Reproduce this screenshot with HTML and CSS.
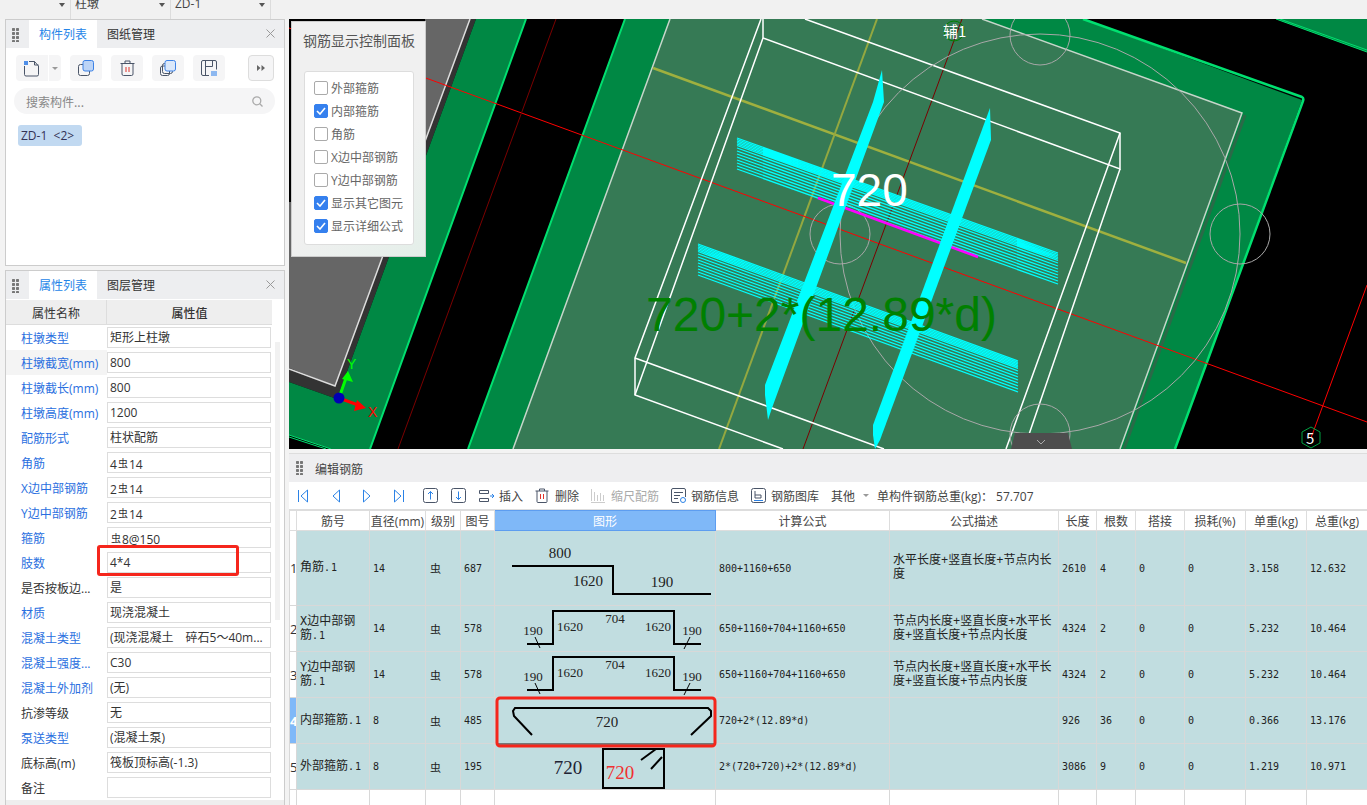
FILE: index.html
```html
<!DOCTYPE html>
<html lang="zh">
<head>
<meta charset="utf-8">
<title>编辑钢筋</title>
<link rel="stylesheet" href="styles.css">
</head>
<body>
<div class="app">
  <header class="topbar">
    <div class="combo"><i class="caret"></i></div>
    <div class="combo"><span>柱墩</span><i class="caret"></i></div>
    <div class="combo"><span>ZD-1</span><i class="caret"></i></div>
  </header>
  <div class="main">
    <aside class="side">
      <section class="panel panel-list">
        <div class="tabs">
          <span class="dots"></span>
          <span class="tab active">构件列表</span>
          <span class="tab">图纸管理</span>
          <span class="close"><svg width="9" height="9" viewBox="0 0 9 9"><path d="M.5.5l8 8M8.500.5l-8 8" stroke="#999" fill="none"/></svg></span>
        </div>
        <div class="tools">
          <span class="tool split">
            <svg width="17" height="17" viewBox="0 0 17 17"><path d="M1.500 6v8.500a1.500 1.500 0 0 0 1.500 1.500h11a1.500 1.500 0 0 0 1.500-1.500V6l-4-4.500H6" class="st"/><path d="M11.500 1.500V5h4" class="st"/><rect x="1" y="1" width="4" height="4" fill="#4f8fe8"/></svg>
            <i class="caret small"></i>
          </span>
          <span class="tool">
            <svg width="16" height="16" viewBox="0 0 16 16"><rect x=".5" y="4.500" width="11" height="11" rx="2" class="st"/><rect x="5" y=".5" width="10.500" height="10.500" rx="2" fill="#bcd4f6" stroke="#3d82e6"/></svg>
          </span>
          <span class="tool">
            <svg width="15" height="16" viewBox="0 0 15 16"><path d="M.5 3.500h14M5 3.500V1h5v2.500M2 3.500v10.500a1.500 1.500 0 0 0 1.500 1.500h8a1.500 1.500 0 0 0 1.500-1.500V3.500" class="st"/><path d="M6 7v5M9 7v5" stroke="#e0332a" fill="none"/></svg>
          </span>
          <span class="tool">
            <svg width="16" height="16" viewBox="0 0 16 16"><rect x=".5" y="6" width="9" height="9.500" rx="2" class="st"/><rect x="2.500" y="3.500" width="10" height="10" rx="2" class="st"/><rect x="5" y=".5" width="10.500" height="10.500" rx="2" fill="#dbe8fa" stroke="#3d82e6"/></svg>
          </span>
          <span class="tool">
            <svg width="16" height="16" viewBox="0 0 16 16"><path d="M8 15.500H2A1.500 1.500 0 0 1 .5 14V2A1.500 1.500 0 0 1 2 .5h12A1.500 1.500 0 0 1 15.500 2v7.500M4.500 1v14.500M4.500 6.500h7M11.500 1v5.500" class="st"/><rect x="10" y="11" width="6" height="5" fill="#8db8f0"/></svg>
          </span>
          <span class="tool more">
            <svg width="8" height="6" viewBox="0 0 8 6"><path d="M0 0l3.500 3L0 6zM4.500 0L8 3 4.500 6z" fill="#666"/></svg>
          </span>
        </div>
        <div class="search">
          <span>搜索构件...</span>
          <svg width="11" height="11" viewBox="0 0 11 11"><circle cx="4.800" cy="4.800" r="4" fill="none" stroke="#aaa" stroke-width="1.300"/><path d="M7.800 7.800L10.500 10.500" stroke="#aaa" stroke-width="1.300"/></svg>
        </div>
        <div class="tag">ZD-1&nbsp; &lt;2&gt;</div>
      </section>

      <section class="panel panel-props">
        <div class="tabs">
          <span class="dots"></span>
          <span class="tab active">属性列表</span>
          <span class="tab">图层管理</span>
          <span class="close"><svg width="9" height="9" viewBox="0 0 9 9"><path d="M.5.5l8 8M8.500.5l-8 8" stroke="#999" fill="none"/></svg></span>
        </div>
        <div class="prop-head"><span class="ph1">属性名称</span><span class="ph2">属性值</span></div>
        <div class="prop-body">
          <div class="prop"><span class="key link">柱墩类型</span><span class="val">矩形上柱墩</span></div>
          <div class="prop hover"><span class="key link">柱墩截宽(mm)</span><span class="val">800</span></div>
          <div class="prop"><span class="key link">柱墩截长(mm)</span><span class="val">800</span></div>
          <div class="prop"><span class="key link">柱墩高度(mm)</span><span class="val">1200</span></div>
          <div class="prop"><span class="key link">配筋形式</span><span class="val">柱状配筋</span></div>
          <div class="prop"><span class="key link">角筋</span><span class="val">4<b class="rb">虫</b>14</span></div>
          <div class="prop"><span class="key link">X边中部钢筋</span><span class="val">2<b class="rb">虫</b>14</span></div>
          <div class="prop"><span class="key link">Y边中部钢筋</span><span class="val">2<b class="rb">虫</b>14</span></div>
          <div class="prop"><span class="key link">箍筋</span><span class="val"><b class="rb">虫</b>8@150</span></div>
          <div class="prop"><span class="key link">肢数</span><span class="val">4*4</span></div>
          <div class="prop"><span class="key">是否按板边...</span><span class="val">是</span></div>
          <div class="prop"><span class="key link">材质</span><span class="val">现浇混凝土</span></div>
          <div class="prop"><span class="key link">混凝土类型</span><span class="val">(现浇混凝土　碎石5～40m...</span></div>
          <div class="prop"><span class="key link">混凝土强度...</span><span class="val">C30</span></div>
          <div class="prop"><span class="key link">混凝土外加剂</span><span class="val">(无)</span></div>
          <div class="prop"><span class="key">抗渗等级</span><span class="val">无</span></div>
          <div class="prop"><span class="key link">泵送类型</span><span class="val">(混凝土泵)</span></div>
          <div class="prop"><span class="key">底标高(m)</span><span class="val">筏板顶标高(-1.3)</span></div>
          <div class="prop"><span class="key">备注</span><span class="val"></span></div>
          <span class="vscroll"></span>
          <span class="callout"></span>
        </div>
        <div class="hscroll"></div>
      </section>
    </aside>

    <div class="work">
      <div class="view">
        <svg class="scene" viewBox="289 19 1078 430" width="1078" height="430">
          <rect x="289" y="19" width="1078" height="430" fill="#000"/>
          <polygon points="425,19 470,19 335,386 289,368 289,202 425,202" fill="#666"/>
          <polygon points="470,19 476,19 337,399 289,382 289,368 335,386" fill="#333"/>
          <polyline points="470,19 335,386 289,369" fill="none" stroke="#ddd" stroke-width="1.500"/>
          <polygon points="476,19 526,19 370,449 331,449 289,435 289,382 337,399" fill="#008844"/>
          <path d="M289 435L331 449M289 437L326 449" stroke="#00e070" stroke-width="1"/>
          <polygon points="625,19 1083,19 1302,100 1175,449 468,449" fill="#008844"/>
          <polygon points="1276,19 1367,19 1367,52" fill="#008844"/>
          <path d="M1276 19L1367 52M1280 19L1367 50" stroke="#00e070" stroke-width="1"/>
          <path d="M526 19L370 449M625 19L468 449" stroke="#00e070" stroke-width="2"/>
          <path d="M1083 19L1302 97Q1304 98 1303 101L1175 449" fill="none" stroke="#00e070" stroke-width="2.500"/>
          <polygon points="670,19 982,19 1242,113 1120,449 513,449" fill="#367a55"/>
          <path d="M1245 115L1124 449" stroke="#2a6a48" stroke-width="3"/>
          <path d="M670 19L513 449M982 19L1242 113L1120 449" fill="none" stroke="#c6d6ca" stroke-width="1.500"/>
          <path d="M653 68L1186 263" stroke="#9fb03f" stroke-width="2.500"/>
          <path d="M877 19L719 449" stroke="#94a840" stroke-width="2"/>
          <path d="M289 28L1367 422" stroke="#f00" stroke-width="1"/>
          <path d="M962 19L803 449" stroke="#7a0000" stroke-width="1"/>
          <path d="M556 19L398 449" stroke="#7a0000" stroke-width="1"/>
          <path d="M1367 285L1311 438" stroke="#f00" stroke-width="1"/>
          <g fill="none" stroke="#fff" stroke-width="1.500">
            <path d="M805 19L1120 133V169L763 38V19"/>
            <path d="M761 19L635 358V395L783 449"/>
            <path d="M763 38L635 395M635 358L884 449"/>
            <path d="M1120 133L1006 449M1120 169L1024 449"/>
          </g>
          <g fill="none" stroke="#a8a8a8" stroke-width="1">
            <circle cx="1040" cy="234" r="200"/>
            <circle cx="1040" cy="35" r="30"/>
            <circle cx="1240" cy="234" r="30"/>
            <circle cx="840" cy="234" r="30"/>
            <circle cx="1040" cy="434" r="30"/>
          </g>
          <g class="hatch">
            <path d="M737 138L1058 253M737 139.500L1058 254.500M737 141L1058 256M737 142.500L1058 257.500M737 144L1058 259M737 145.500L1058 260.500M737 148L1058 263M737 151L1058 266M737 154L1058 269M737 157L1058 272M737 160L1058 275M737 163L1058 278M737 166L1058 281M737 169L1058 284"/>
            <path d="M698 244L1018 361M698 245.500L1018 362.500M698 247L1018 364M698 248.500L1018 365.500M698 250L1018 367M698 251.500L1018 368.500M698 254L1018 371M698 257L1018 374M698 260L1018 377M698 263L1018 380M698 266L1018 383M698 269L1018 386M698 272L1018 389M698 275L1018 392"/>
          </g>
          <path d="M818 198L978 257" stroke="#f0f" stroke-width="2.500"/>
          <polygon points="882,70 884,102 772,408 768,420 765,395 765,385 873,102" fill="#0ff"/>
          <polygon points="990,108 991,140 880,440 875,449 873,435 873,425 980,135" fill="#0ff"/>
          <text x="831" y="206" class="big-white">720</text>
          <text x="646" y="331" class="big-green">720+2*(12.89*d)</text>
          <circle cx="954" cy="31" r="10" fill="none" stroke="#008000"/>
          <text x="943" y="37" class="axis-note">辅1</text>
          <polygon points="1311,427 1320,432 1320,443 1311,448 1302,443 1302,432" fill="none" stroke="#00a040"/>
          <text x="1306" y="444" class="axis-note">5</text>
          <polygon points="1015,433 1068,433 1072,449 1011,449" fill="#4d4d4d"/>
          <path d="M1037 440l4 4 4-4" fill="none" stroke="#aaa"/>
          <path d="M339 398L346 378" stroke="#0f0" stroke-width="3"/>
          <polygon points="348,371 353,382 342,379" fill="#0f0"/>
          <path d="M339 398L358 405" stroke="#f00" stroke-width="3"/>
          <polygon points="366,408 354,411 357,400" fill="#f00"/>
          <circle cx="339" cy="398" r="5.500" fill="#0000b4"/>
          <text x="347" y="369" class="axis-y">Y</text>
          <text x="368" y="417" class="axis-x">X</text>
        </svg>
        <div class="control">
          <div class="control-title">钢筋显示控制面板</div>
          <div class="checks">
            <div class="check"><span class="box"></span>外部箍筋</div>
            <div class="check"><span class="box on"><svg width="10" height="8" viewBox="0 0 10 8"><path d="M1 4l3 3 5-6" fill="none" stroke="#fff" stroke-width="1.600"/></svg></span>内部箍筋</div>
            <div class="check"><span class="box"></span>角筋</div>
            <div class="check"><span class="box"></span>X边中部钢筋</div>
            <div class="check"><span class="box"></span>Y边中部钢筋</div>
            <div class="check"><span class="box on"><svg width="10" height="8" viewBox="0 0 10 8"><path d="M1 4l3 3 5-6" fill="none" stroke="#fff" stroke-width="1.600"/></svg></span>显示其它图元</div>
            <div class="check"><span class="box on"><svg width="10" height="8" viewBox="0 0 10 8"><path d="M1 4l3 3 5-6" fill="none" stroke="#fff" stroke-width="1.600"/></svg></span>显示详细公式</div>
          </div>
        </div>
      </div>

      <section class="editor">
        <div class="editor-head"><span class="dots"></span><span class="editor-title">编辑钢筋</span></div>
        <div class="bar">
          <span class="ico i-first"><svg width="10" height="14" viewBox="0 0 10 14"><path d="M.5 1v12M9.500 1L3 7l6.500 6z" fill="none" stroke="#2b82e6"/></svg></span>
          <span class="ico i-prev"><svg width="8" height="14" viewBox="0 0 8 14"><path d="M7.500 1L1 7l6.500 6z" fill="none" stroke="#2b82e6"/></svg></span>
          <span class="ico i-next"><svg width="8" height="14" viewBox="0 0 8 14"><path d="M.5 1L7 7l-6.500 6z" fill="none" stroke="#2b82e6"/></svg></span>
          <span class="ico i-last"><svg width="10" height="14" viewBox="0 0 10 14"><path d="M9.500 1v12M.5 1L7 7l-6.500 6z" fill="none" stroke="#2b82e6"/></svg></span>
          <span class="ico i-up"><svg width="15" height="15" viewBox="0 0 15 15"><rect x=".5" y=".5" width="14" height="14" rx="2" class="st"/><path d="M7.500 11.500v-8M5 6l2.500-2.500L10 6" fill="none" stroke="#2b82e6"/></svg></span>
          <span class="ico i-down"><svg width="15" height="15" viewBox="0 0 15 15"><rect x=".5" y=".5" width="14" height="14" rx="2" class="st"/><path d="M7.500 3.500v8M5 9l2.500 2.500L10 9" fill="none" stroke="#2b82e6"/></svg></span>
          <span class="act i-ins"><svg width="16" height="12" viewBox="0 0 16 12"><path d="M.5.5h9v3h-9zM.5 8.500h9v3h-9z" class="st"/><path d="M11 6h4M13 4l2 2-2 2" fill="none" stroke="#2b82e6"/></svg>插入</span>
          <span class="act i-del"><svg width="14" height="15" viewBox="0 0 14 15"><path d="M.5 3h13M4.500 3V1h5v2M2 3v10.500A1 1 0 0 0 3 14.500h8a1 1 0 0 0 1-1V3" class="st"/><path d="M5.500 6v5M8.500 6v5" stroke="#e0332a" fill="none"/></svg>删除</span>
          <span class="act i-scale off"><svg width="14" height="15" viewBox="0 0 14 15"><path d="M.5 1v12M3.500 4v9M6.500 7v6M9.500 5v8M12.500 7v6M0 14.500h14" stroke="#ccc" fill="none"/></svg>缩尺配筋</span>
          <span class="act i-info"><svg width="15" height="15" viewBox="0 0 15 15"><path d="M8 14.500H2A1.500 1.500 0 0 1 .5 13V2A1.500 1.500 0 0 1 2 .5h11A1.500 1.500 0 0 1 14.500 2v7M3 4.500h9M3 7.500h6M3 10.500h4" class="st"/><circle cx="12" cy="12" r="2.500" fill="none" stroke="#2b82e6"/></svg>钢筋信息</span>
          <span class="act i-lib"><svg width="15" height="15" viewBox="0 0 15 15"><rect x=".5" y=".5" width="14" height="14" rx="2" class="st"/><path d="M4 3v7h6V7H4" class="st"/><path d="M3 12.500h9" stroke="#2b82e6"/></svg>钢筋图库</span>
          <span class="act i-other">其他<i class="caret small"></i></span>
          <span class="act i-total">单构件钢筋总重(kg)： 57.707</span>
        </div>
        <table class="grid">
          <colgroup>
            <col class="c0"><col class="c1"><col class="c2"><col class="c3"><col class="c4"><col class="c5"><col class="c6"><col class="c7"><col class="c8"><col class="c9"><col class="c10"><col class="c11"><col class="c12"><col class="c13">
          </colgroup>
          <thead>
            <tr>
              <th></th><th>筋号</th><th>直径(mm)</th><th>级别</th><th>图号</th><th class="sel">图形</th><th>计算公式</th><th>公式描述</th><th>长度</th><th>根数</th><th>搭接</th><th>损耗(%)</th><th>单重(kg)</th><th>总重(kg)</th>
            </tr>
          </thead>
          <tbody>
            <tr class="r1">
              <td class="no">1</td><td class="cjk">角筋<span class="lat">.1</span></td><td>14</td><td class="grade">虫</td><td>687</td>
              <td class="fig"><svg viewBox="495 531 221 74" width="221" height="74"><path d="M512 566H613V594H711" class="bar-line"/><text x="560" y="558" class="n15">800</text><text x="588" y="586" class="n15">1620</text><text x="662" y="587" class="n15">190</text></svg></td>
              <td>800+1160+650</td><td class="cjk">水平长度+竖直长度+节点内长度</td><td>2610</td><td>4</td><td>0</td><td>0</td><td>3.158</td><td>12.632</td>
            </tr>
            <tr class="r2">
              <td class="no">2</td><td class="cjk">X边中部钢筋<span class="lat">.1</span></td><td>14</td><td class="grade">虫</td><td>578</td>
              <td class="fig"><svg viewBox="495 606 221 45" width="221" height="45"><path d="M527 644H553V611H674V644H701" class="bar-line"/><path d="M535 637L540 648M690 637L684 649" class="tick"/><text x="533" y="635" class="n13">190</text><text x="570" y="631" class="n13">1620</text><text x="615" y="623" class="n13">704</text><text x="658" y="631" class="n13">1620</text><text x="692" y="635" class="n13">190</text></svg></td>
              <td>650+1160+704+1160+650</td><td class="cjk">节点内长度+竖直长度+水平长度+竖直长度+节点内长度</td><td>4324</td><td>2</td><td>0</td><td>0</td><td>5.232</td><td>10.464</td>
            </tr>
            <tr class="r2">
              <td class="no">3</td><td class="cjk">Y边中部钢筋<span class="lat">.1</span></td><td>14</td><td class="grade">虫</td><td>578</td>
              <td class="fig"><svg viewBox="495 606 221 45" width="221" height="45"><path d="M527 644H553V611H674V644H701" class="bar-line"/><path d="M535 637L540 648M690 637L684 649" class="tick"/><text x="533" y="635" class="n13">190</text><text x="570" y="631" class="n13">1620</text><text x="615" y="623" class="n13">704</text><text x="658" y="631" class="n13">1620</text><text x="692" y="635" class="n13">190</text></svg></td>
              <td>650+1160+704+1160+650</td><td class="cjk">节点内长度+竖直长度+水平长度+竖直长度+节点内长度</td><td>4324</td><td>2</td><td>0</td><td>0</td><td>5.232</td><td>10.464</td>
            </tr>
            <tr class="r2">
              <td class="no cur">4</td><td class="cjk">内部箍筋<span class="lat">.1</span></td><td>8</td><td class="grade">虫</td><td>485</td>
              <td class="fig"><svg viewBox="495 698 221 45" width="221" height="45"><path d="M532 735L514 716L513 711L515 708H708L711 711V716L691 735" class="bar-line"/><text x="607" y="727" class="n15">720</text><path d="M496 744H716" stroke="#777" stroke-width="2"/><rect x="497" y="698" width="218" height="48" rx="3" class="red-box"/></svg></td>
              <td>720+2*(12.89*d)</td><td></td><td>926</td><td>36</td><td>0</td><td>0</td><td>0.366</td><td>13.176</td>
            </tr>
            <tr class="r2">
              <td class="no">5</td><td class="cjk">外部箍筋<span class="lat">.1</span></td><td>8</td><td class="grade">虫</td><td>195</td>
              <td class="fig"><svg viewBox="495 744 221 45" width="221" height="45"><text x="568" y="774" class="n18">720</text><rect x="603" y="749" width="61" height="39" class="bar-line"/><text x="620" y="779" class="n18 red">720</text><path d="M641 760L656 749M651 769L662 757" class="bar-line"/></svg></td>
              <td>2*(720+720)+2*(12.89*d)</td><td></td><td>3086</td><td>9</td><td>0</td><td>0</td><td>1.219</td><td>10.971</td>
            </tr>
            <tr class="r2 blank">
              <td class="no">6</td><td></td><td></td><td></td><td></td><td></td><td></td><td></td><td></td><td></td><td></td><td></td><td></td><td></td>
            </tr>
          </tbody>
        </table>
      </section>
    </div>
  </div>
</div>
</body>
</html>
```
FILE: styles.css
```css
* { box-sizing: border-box; }
html, body { margin: 0; padding: 0; }
body {
  width: 1367px;
  height: 805px;
  overflow: hidden;
  background: #f3f3f3;
  font: 12px/1.2 "Open Sans", "Noto Sans CJK SC", sans-serif;
  color: #333;
}
.app { display: flex; flex-direction: column; height: 805px; }
.st { fill: none; stroke: #4a5568; }

.topbar { height: 19px; flex: none; display: flex; background: #f1f1f1; overflow: hidden; }
.combo {
  width: 100px;
  height: 19px;
  display: flex;
  justify-content: space-between;
  align-items: flex-end;
  padding: 0 5px 9px 4px;
  border-right: 1px solid #dcdcdc;
  font-size: 12px;
  line-height: 14px;
  color: #444;
}
.combo:first-child { width: 71px; justify-content: flex-end; padding-right: 5px; }
.combo:nth-child(n+2) span { display: block; transform: translateY(1px); }
.caret { display: block; width: 0; height: 0; border: 3.500px solid transparent; border-top: 4px solid #555; border-bottom: 0; margin-bottom: 3px; }
.caret.small { border-width: 3px 3px 0; border-top-color: #999; margin: 0; }

.main { flex: 1; display: flex; min-height: 0; }
.side { width: 289px; flex: none; padding-left: 5px; display: flex; flex-direction: column; gap: 4px; }
.panel { width: 280px; background: #fff; border: 1px solid #ccc; }
.panel-list { height: 247px; }
.panel-props { height: 535px; }

.tabs { height: 28px; display: flex; align-items: stretch; background: #edeef0; position: relative; padding-left: 23px; }
.dots {
  width: 7px;
  height: 14px;
  flex: none;
  background-image: radial-gradient(circle at 1.500px 1.500px, #777 1.400px, transparent 1.500px);
  background-size: 4px 4px;
}
.tabs .dots { position: absolute; left: 6px; top: 8px; }
.tab { width: 68px; display: flex; align-items: center; justify-content: center; padding-bottom: 2px; font: 12px "Noto Sans CJK SC", sans-serif; color: #333; }
.tab.active { background: #fff; color: #2585e8; }
.close { margin-left: auto; width: 28px; display: flex; align-items: center; justify-content: center; padding-bottom: 2px; }

.tools { display: flex; padding: 7px 0 0 10px; height: 33px; }
.tool { width: 32px; height: 26px; margin-right: 9px; background: #f5f5f6; border-radius: 4px; display: flex; align-items: center; justify-content: center; }
.tool.split { width: 45px; justify-content: flex-start; padding-left: 7px; gap: 12px; border-radius: 4px; position: relative; }
.tool.split::after { content: ""; position: absolute; left: 32px; top: 0; width: 1px; height: 26px; background: #fff; }
.tool.more { width: 26px; margin: 0 0 0 14px; border: 1px solid #ddd; }
.search {
  margin: 7px 0 0 8px;
  width: 261px;
  height: 26px;
  border-radius: 13px;
  background: #f5f5f6;
  display: flex;
  align-items: center;
  justify-content: space-between;
  padding: 0 12px;
  color: #888;
  font: 12px "Noto Sans CJK SC", sans-serif;
}
.tag { margin: 11px 0 0 12px; width: 64px; height: 21px; background: #c1d9f1; border-radius: 3px; padding-left: 3px; line-height: 21px; color: #335; font-size: 12px; white-space: nowrap; }

.prop-head { height: 25px; display: flex; background: #eee; border-bottom: 1px solid #ddd; margin-top: 1px; width: 266px; font: 12px/25px "Noto Sans CJK SC", sans-serif; }
.ph1 { width: 101px; text-align: center; border-right: 1px solid #ddd; }
.ph2 { flex: 1; text-align: center; font-weight: 500; }
.prop-body { position: relative; }
.prop { height: 25px; display: flex; align-items: center; font: 12px "Open Sans", "Noto Sans CJK SC", sans-serif; }
.prop.hover { background: linear-gradient(90deg, #f4f4f4 101px, transparent 101px); }
.key { width: 101px; padding-left: 15px; white-space: nowrap; flex: none; color: #333; }
.key.link { color: #2a6fe0; }
.val { width: 164px; height: 21px; border: 1px solid #ddd; padding: 0 2px; line-height: 19px; color: #333; white-space: nowrap; overflow: hidden; }
.rb { font-weight: 400; font-size: 10px; vertical-align: 2px; margin: 0 1px; font-family: "Noto Sans CJK SC", sans-serif; }
.vscroll { position: absolute; left: 269px; top: 17px; width: 5px; height: 278px; background: #f1f1f1; }
.callout { position: absolute; left: 91px; top: 220px; width: 142px; height: 31px; border: 3px solid #f5261c; border-radius: 3px; }
.hscroll { height: 8px; background: #eee; }

.work { flex: 1; min-width: 0; display: flex; flex-direction: column; gap: 4px; }
.view { position: relative; height: 430px; flex: none; overflow: hidden; background: #000; }
.scene { display: block; }
.hatch path { stroke: #0ff; stroke-width: 1.300; fill: none; }
.big-white { font: 46px "Liberation Sans", sans-serif; fill: #fff; }
.big-green { font: 48px "Liberation Sans", sans-serif; fill: #008000; }
.axis-note { font: 15px "Noto Sans CJK SC", sans-serif; fill: #fff; }
.axis-y { font: 14px "Liberation Sans", sans-serif; fill: #0f0; }
.axis-x { font: 14px "Liberation Sans", sans-serif; fill: #f00; }

.control {
  position: absolute;
  left: 2px;
  top: 2px;
  width: 135px;
  height: 236px;
  background: linear-gradient(135deg, #f0f0f0 60%, #e4efe9);
  border: 1px solid #ccc;
  padding: 0 12px;
}
.control-title { font: 14px/36px "Noto Sans CJK SC", sans-serif; color: #555; height: 49px; white-space: nowrap; margin-left: -1px; }
.checks { width: 110px; height: 174px; background: #fff; border: 1px solid #ddd; border-radius: 3px; padding: 4px 0 0 9px; }
.check { height: 23px; display: flex; align-items: center; font: 12px "Open Sans", "Noto Sans CJK SC", sans-serif; color: #666; white-space: nowrap; gap: 3px; }
.box { width: 14px; height: 14px; flex: none; border: 1px solid #aaa; border-radius: 2px; background: #fff; display: flex; align-items: center; justify-content: center; }
.box.on { background: #3580ee; border-color: #3580ee; }

.editor { flex: 1; min-height: 0; background: #fff; border-top: 1px solid #ddd; overflow: hidden; }
.editor-head { height: 28px; background: #eeeef0; display: flex; align-items: center; padding-left: 7px; gap: 12px; }
.editor-title { font: 12px "Noto Sans CJK SC", sans-serif; color: #444; }
.bar { height: 28px; display: flex; align-items: center; font: 12px "Open Sans", "Noto Sans CJK SC", sans-serif; color: #444; border-bottom: 1px solid #ddd; }
.ico { display: flex; flex: none; }
.i-first { margin-left: 9px; }
.i-prev { margin-left: 24px; }
.i-next { margin-left: 23px; }
.i-last { margin-left: 23px; }
.i-up { margin-left: 19px; }
.i-down { margin-left: 13px; }
.act { display: flex; align-items: center; gap: 5px; flex: none; white-space: pre; }
.i-ins { margin-left: 13px; gap: 4px; }
.i-del { margin-left: 12px; gap: 6px; }
.i-scale { margin-left: 12px; gap: 6px; }
.i-info { margin-left: 12px; }
.i-lib { margin-left: 12px; }
.i-other { margin-left: 12px; gap: 8px; }
.i-total { margin-left: 8px; }
.off { color: #aaa; }

.grid { border-collapse: collapse; table-layout: fixed; width: 1078px; font: 10px "DejaVu Sans Mono", "Noto Sans CJK SC", monospace; color: #222; }
.c0 { width: 7px; } .c1 { width: 73px; } .c2 { width: 56px; } .c3 { width: 35px; } .c4 { width: 34px; }
.c5 { width: 221px; } .c6 { width: 174px; } .c7 { width: 169px; } .c8 { width: 38px; } .c9 { width: 39px; }
.c10 { width: 49px; } .c11 { width: 61px; } .c12 { width: 61px; } .c13 { width: 61px; }
.grid th { height: 20px; padding: 0; border: 1px solid #ddd; font: 12px "Open Sans", "Noto Sans CJK SC", sans-serif; color: #444; white-space: nowrap; overflow: hidden; }
.grid th.sel { background: #7fb8f8; color: #fff; border-color: #5d9df0; }
.grid td { padding: 0 3px; border: 1px solid #d8d8d8; background: #c1dde0; vertical-align: middle; }
.r1 { height: 75px; }
.r2 { height: 46px; }
.grid td.no { padding: 0; background: #fff; font: 13px "Open Sans", sans-serif; text-align: right; overflow: hidden; color: #333; }
.grid td.cur { background: #7fb8f8; color: #fff; font-weight: 700; }
.grid td.cjk { font: 12px/14px "Liberation Mono", "Noto Sans CJK SC", monospace; }
.lat { font: 10px "DejaVu Sans Mono", monospace; letter-spacing: 1px; }
.grid td.grade { font: 11px "Noto Sans CJK SC", sans-serif; padding-left: 4px; }
.grid td.fig { padding: 0; }
.fig svg { display: block; overflow: visible; position: relative; }
.grid .blank td { background: #fff; }
.bar-line { fill: none; stroke: #000; stroke-width: 2; }
.tick { fill: none; stroke: #000; stroke-width: 1; }
.red-box { fill: none; stroke: #f5261c; stroke-width: 3; }
.n13, .n15, .n18 { font-family: "Liberation Serif", serif; text-anchor: middle; fill: #222; }
.n13 { font-size: 13px; }
.n15 { font-size: 15px; }
.n18 { font-size: 19px; fill: #223; }
.n18.red { fill: #f03030; }
```
